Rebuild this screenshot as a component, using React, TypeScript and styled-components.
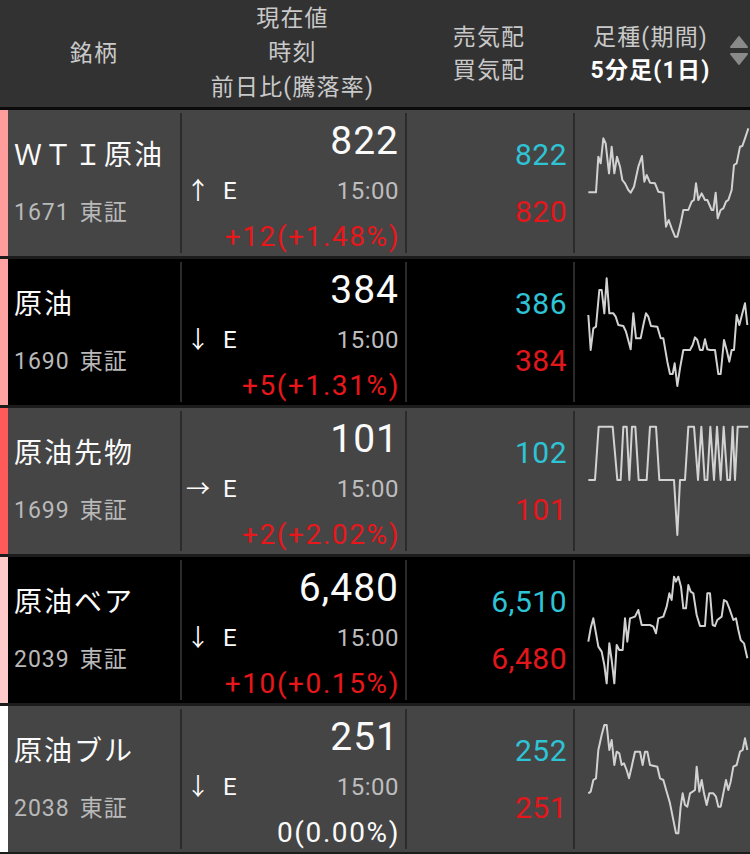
import React from "react";
import styled, { createGlobalStyle } from "styled-components";

type Stock = {
  name: string;
  code: string;
  price: string;
  arrow: string;
  time: string;
  change: string;
  up: boolean;
  ask: string;
  bid: string;
  mark: string;
  dark: boolean;
  // chart traced in 3x units, y0 is the top of the cell in the same units
  y0: number;
  line: number[];
};

const stocks: Stock[] = [
  {
    name: "ＷＴＩ原油",
    code: "1671",
    price: "822",
    arrow: "↑",
    time: "15:00",
    change: "+12(+1.48%)",
    up: true,
    ask: "822",
    bid: "820",
    mark: "#ff9c9c",
    dark: false,
    y0: 39,
    line: [
      55, 277, 78, 277, 85, 170, 92, 190, 100, 115, 107, 130, 117, 220, 125, 140, 133, 220, 141, 170,
      150, 200, 157, 240, 165, 250, 175, 270, 182, 278, 192, 260, 205, 200, 216, 168, 223, 245, 230, 225,
      240, 248, 255, 250, 265, 275, 280, 278, 288, 380, 296, 360, 305, 385, 315, 410, 322, 410, 332, 370,
      340, 330, 355, 330, 365, 305, 372, 300, 378, 250, 385, 300, 395, 280, 405, 300, 412, 300, 425, 330,
      430, 330, 437, 278, 443, 355, 452, 330, 460, 325, 468, 305, 475, 300, 485, 270, 492, 195, 500, 190,
      510, 140, 517, 138, 525, 115, 535, 85,
    ],
  },
  {
    name: "原油",
    code: "1690",
    price: "384",
    arrow: "↓",
    time: "15:00",
    change: "+5(+1.31%)",
    up: true,
    ask: "386",
    bid: "384",
    mark: "#ffa2a2",
    dark: true,
    y0: 36,
    line: [
      55, 195, 62, 300, 70, 235, 78, 230, 88, 120, 95, 120, 103, 190, 110, 85, 118, 190, 130, 190,
      137, 200, 145, 225, 160, 228, 168, 245, 182, 298, 190, 190, 198, 265, 212, 265, 220, 225, 228, 190,
      235, 200, 243, 228, 262, 230, 272, 265, 280, 265, 292, 335, 300, 372, 308, 372, 314, 340, 322, 408,
      330, 355, 340, 300, 360, 300, 368, 285, 375, 262, 382, 270, 390, 300, 398, 300, 405, 268, 412, 298,
      420, 300, 435, 300, 445, 372, 452, 372, 462, 270, 470, 300, 478, 335, 485, 300, 492, 300, 500, 195,
      508, 225, 515, 198, 525, 160, 532, 225,
    ],
  },
  {
    name: "原油先物",
    code: "1699",
    price: "101",
    arrow: "→",
    time: "15:00",
    change: "+2(+2.02%)",
    up: true,
    ask: "102",
    bid: "101",
    mark: "#ff5a5a",
    dark: false,
    y0: 483,
    line: [
      55, 690, 75, 690, 86, 530, 128, 530, 142, 690, 152, 690, 160, 530, 170, 530, 178, 690, 186, 530,
      196, 530, 206, 690, 230, 690, 240, 530, 258, 530, 268, 690, 312, 690, 322, 855, 330, 690, 345, 690,
      355, 530, 372, 530, 384, 690, 394, 530, 404, 690, 412, 690, 421, 530, 432, 690, 441, 530, 452, 690,
      461, 530, 472, 690, 480, 690, 488, 530, 495, 690, 503, 530, 510, 530, 535, 530,
    ],
  },
  {
    name: "原油ベア",
    code: "2039",
    price: "6,480",
    arrow: "↓",
    time: "15:00",
    change: "+10(+0.15%)",
    up: true,
    ask: "6,510",
    bid: "6,480",
    mark: "#ffcaca",
    dark: true,
    y0: 30,
    line: [
      55, 275, 62, 235, 70, 205, 78, 250, 85, 290, 95, 305, 103, 345, 110, 400, 118, 280, 125, 330,
      133, 400, 140, 285, 148, 300, 158, 300, 165, 205, 172, 275, 180, 205, 195, 200, 205, 180, 215, 225,
      240, 225, 250, 230, 258, 250, 265, 205, 280, 200, 290, 170, 298, 130, 305, 150, 312, 80, 318, 95,
      325, 80, 333, 110, 340, 175, 348, 175, 355, 105, 362, 125, 370, 130, 380, 195, 390, 228, 405, 228,
      412, 130, 420, 130, 428, 225, 435, 228, 442, 210, 455, 200, 462, 150, 470, 155, 478, 175, 490, 210,
      498, 205, 505, 240, 512, 270, 522, 280, 532, 325,
    ],
  },
  {
    name: "原油ブル",
    code: "2038",
    price: "251",
    arrow: "↓",
    time: "15:00",
    change: "0(0.00%)",
    up: false,
    ask: "252",
    bid: "251",
    mark: "#ffffff",
    dark: false,
    y0: 477,
    line: [
      55, 730, 62, 725, 70, 690, 78, 685, 85, 600, 95, 555, 103, 525, 110, 525, 118, 600, 125, 570,
      133, 645, 140, 605, 148, 610, 155, 645, 162, 640, 170, 660, 177, 685, 185, 650, 195, 605, 210, 605,
      218, 645, 225, 605, 232, 605, 240, 645, 262, 650, 270, 685, 280, 690, 290, 725, 300, 760, 312, 820,
      318, 850, 325, 850, 332, 770, 338, 730, 345, 765, 352, 770, 360, 730, 368, 725, 375, 720, 380, 650,
      388, 725, 395, 690, 402, 730, 410, 765, 418, 730, 430, 730, 438, 740, 445, 770, 452, 770, 460, 730,
      468, 690, 475, 720, 482, 695, 490, 650, 500, 645, 510, 605, 518, 600, 525, 565, 532, 600,
    ],
  },
];

const COLS = "8px 172px 225px 168px 1fr";

const GlobalStyle = createGlobalStyle`
  html, body {
    margin: 0;
    padding: 0;
    background: #000;
  }
  body {
    font-family: Roboto, "Noto Sans CJK JP", sans-serif;
    -webkit-font-smoothing: antialiased;
  }
`;

const Screen = styled.div`
  width: 750px;
  height: 854px;
  overflow: hidden;
  background: #1c1c1c;
  display: flex;
  flex-direction: column;
  gap: 3px;
`;

const Header = styled.div`
  display: grid;
  grid-template-columns: ${COLS};
  height: 107px;
  background: #323232;
  border-bottom: 3px solid #0a0a0a;
  margin-bottom: -3px;
  color: #c9c9c9;
  font-size: 23px;
  letter-spacing: 1.2px;
`;

const HeadCell = styled.div<{ $lh: number }>`
  display: flex;
  flex-direction: column;
  align-items: center;
  justify-content: center;
  line-height: ${(p) => p.$lh}px;
  white-space: nowrap;
`;

const ChartHead = styled.div`
  display: flex;
  align-items: center;
`;

const ChartLabel = styled(HeadCell)`
  flex: 1;
`;

const Period = styled.span`
  color: #fff;
  font-weight: bold;
`;

const Sorter = styled.svg`
  width: 18px;
  height: 30px;
  margin: 0 2px 6px 2px;
  fill: #8a8a8a;
  stroke: #8a8a8a;
  stroke-width: 2;
  stroke-linejoin: round;
`;

const Row = styled.div<{ $dark: boolean }>`
  display: grid;
  grid-template-columns: ${COLS};
  height: 146px;
  background: ${(p) => (p.$dark ? "#000" : "#454545")};
`;

const Mark = styled.div<{ $color: string }>`
  background: ${(p) => p.$color};
`;

const NameCell = styled.div`
  display: flex;
  flex-direction: column;
  gap: 25px;
  padding: 29px 0 0 6px;
  white-space: nowrap;
`;

const Name = styled.div`
  color: #fafafa;
  font-size: 28px;
  line-height: 34px;
  letter-spacing: 2px;
`;

const Code = styled.div`
  color: #b9b9b9;
  font-size: 23px;
  line-height: 30px;
  letter-spacing: 1px;
`;

const Market = styled.span`
  margin-left: 10px;
`;

const Cell = styled.div`
  margin: 3px 0;
  border-left: 2px solid #2b2b2b;
  min-width: 0;
`;

const PriceCell = styled(Cell)`
  display: flex;
  flex-direction: column;
  gap: 15px;
  padding: 8px 6px 0 4px;
`;

const Price = styled.div`
  color: #fafafa;
  font-size: 39px;
  line-height: 40px;
  letter-spacing: 1px;
  text-align: right;
`;

const TimeLine = styled.div`
  display: flex;
  justify-content: space-between;
  font-size: 24px;
  line-height: 30px;
  letter-spacing: 0.5px;
`;

const Arrow = styled.span`
  display: inline-block;
  width: 37px;
  color: #fafafa;
`;

const Exchange = styled.span`
  color: #fafafa;
`;

const Time = styled.span`
  color: #bdbdbd;
`;

const Change = styled.div<{ $up: boolean }>`
  color: ${(p) => (p.$up ? "#e8171b" : "#fafafa")};
  font-size: 28px;
  line-height: 32px;
  letter-spacing: 1.6px;
  text-align: right;
  margin-right: -1px;
`;

const QuoteCell = styled(Cell)`
  display: flex;
  flex-direction: column;
  align-items: flex-end;
  gap: 21px;
  padding: 24px 6px 0 0;
  font-size: 30px;
  line-height: 36px;
  letter-spacing: 0.5px;
`;

const Quote = styled.div<{ $tone: "ask" | "bid" }>`
  color: ${(p) => (p.$tone === "ask" ? "#2ec3d5" : "#e3171b")};
`;

const ChartCell = styled(Cell)`
  display: flex;
`;

const Spark = styled.svg`
  width: 175px;
  height: 140px;
  fill: none;
  stroke: #d2d2d2;
  stroke-width: 6;
  stroke-linejoin: round;
`;

function Sparkline({ line, y0 }: { line: number[]; y0: number }) {
  const pts: string[] = [];
  for (let i = 0; i < line.length; i += 2) pts.push(`${line[i]},${line[i + 1]}`);
  return (
    <Spark viewBox={`15 ${y0} 525 420`}>
      <polyline points={pts.join(" ")} />
    </Spark>
  );
}

export default function App() {
  return (
    <>
      <GlobalStyle />
      <Screen>
        <Header>
          <div />
          <HeadCell $lh={34}>銘柄</HeadCell>
          <HeadCell $lh={34.5}>
            <span>現在値</span>
            <span>時刻</span>
            <span>前日比(騰落率)</span>
          </HeadCell>
          <HeadCell $lh={33}>
            <span>売気配</span>
            <span>買気配</span>
          </HeadCell>
          <ChartHead>
            <ChartLabel $lh={33}>
              <span>足種(期間)</span>
              <Period>5分足(1日)</Period>
            </ChartLabel>
            <Sorter viewBox="0 0 18 30">
              <polygon points="9,1 17,11 1,11" />
              <polygon points="1,18 17,18 9,28" />
            </Sorter>
          </ChartHead>
        </Header>

        {stocks.map((s) => (
          <Row key={s.code} $dark={s.dark}>
            <Mark $color={s.mark} />
            <NameCell>
              <Name>{s.name}</Name>
              <Code>
                {s.code}
                <Market>東証</Market>
              </Code>
            </NameCell>
            <PriceCell>
              <Price>{s.price}</Price>
              <TimeLine>
                <span>
                  <Arrow>{s.arrow}</Arrow>
                  <Exchange>E</Exchange>
                </span>
                <Time>{s.time}</Time>
              </TimeLine>
              <Change $up={s.up}>{s.change}</Change>
            </PriceCell>
            <QuoteCell>
              <Quote $tone="ask">{s.ask}</Quote>
              <Quote $tone="bid">{s.bid}</Quote>
            </QuoteCell>
            <ChartCell>
              <Sparkline line={s.line} y0={s.y0} />
            </ChartCell>
          </Row>
        ))}
      </Screen>
    </>
  );
}
